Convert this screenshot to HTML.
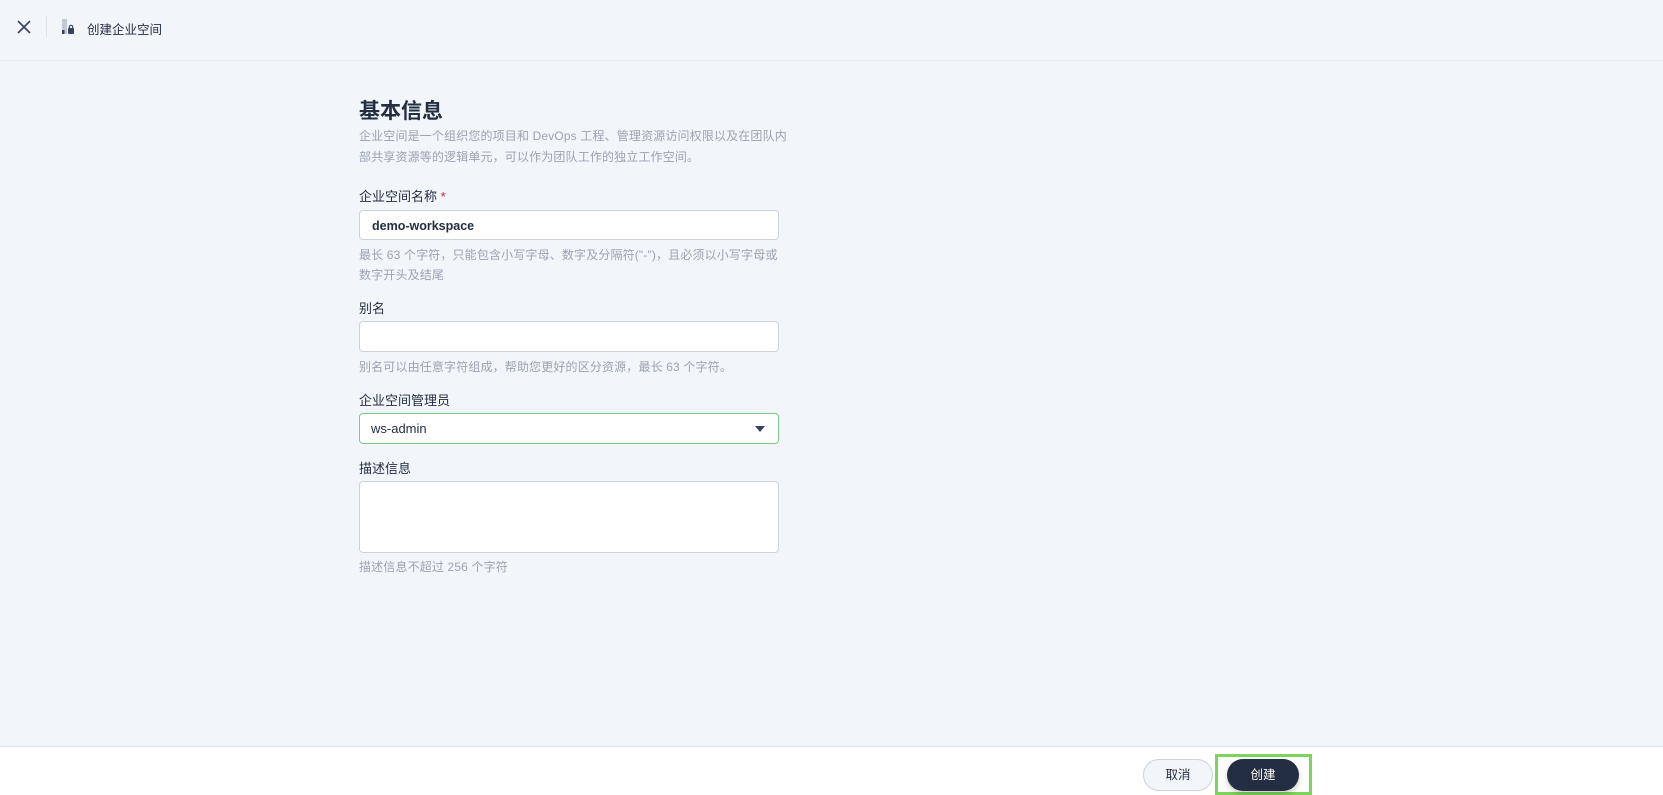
<!DOCTYPE html>
<html><head><meta charset="utf-8"><style>
*{box-sizing:border-box;margin:0;padding:0}
body{width:1663px;height:795px;background:#f2f5fa;font-family:"Liberation Sans","Noto Sans CJK SC",sans-serif;color:#242e42;position:relative;overflow:hidden}
.a{position:absolute;white-space:nowrap}
.lbl{font-size:13px;color:#242e42}
.hint{font-size:12px;color:#9ba3b2;line-height:20px;letter-spacing:0.15px}
.box{position:absolute;left:359px;width:420px;background:#fff;border:1px solid #ccd3db;border-radius:4px}
</style></head><body>
<div class="a" style="left:0;top:60px;width:1663px;height:1px;background:#e6ebf1"></div>
<svg class="a" style="left:17px;top:20px" width="14" height="14" viewBox="0 0 14 14"><path d="M1 1L13 13M13 1L1 13" stroke="#36435c" stroke-width="1.6"/></svg>
<div class="a" style="left:46px;top:16px;width:1px;height:21px;background:#dfe4ec"></div>
<svg class="a" style="left:62px;top:17px" width="14" height="19" viewBox="0 0 14 19"><rect x="0" y="2" width="5" height="15" fill="#c1c9d4"/><rect x="0" y="13" width="2.5" height="4" fill="#36435c"/><rect x="6" y="11" width="6" height="6" rx="1" fill="#36435c"/><path d="M7.3 11.5v-1.5a1.7 1.7 0 0 1 3.4 0v1.5" stroke="#36435c" fill="none" stroke-width="1.2"/></svg>
<div class="a" style="left:87px;top:19px;font-size:12.5px;color:#242e42">创建企业空间</div>

<div class="a" style="left:359px;top:95px;font-size:21px;font-weight:bold;color:#242e42">基本信息</div>
<div class="a hint" style="left:359px;top:126px;line-height:21px">企业空间是一个组织您的项目和 DevOps 工程、管理资源访问权限以及在团队内<br>部共享资源等的逻辑单元，可以作为团队工作的独立工作空间。</div>

<div class="a lbl" style="left:359px;top:186px">企业空间名称 <span style="color:#ca2621">*</span></div>
<div class="box" style="top:210px;height:30px"><span class="a" style="left:12px;top:8px;font-size:12.5px;font-weight:bold">demo-workspace</span></div>
<div class="a hint" style="left:359px;top:245px">最长 63 个字符，只能包含小写字母、数字及分隔符("-")，且必须以小写字母或<br>数字开头及结尾</div>

<div class="a lbl" style="left:359px;top:298px">别名</div>
<div class="box" style="top:321px;height:31px"></div>
<div class="a hint" style="left:359px;top:357px">别名可以由任意字符组成，帮助您更好的区分资源，最长 63 个字符。</div>

<div class="a lbl" style="left:359px;top:390px">企业空间管理员</div>
<div class="box" style="top:413px;height:31px;border-color:#7dc98a"><span class="a" style="left:11px;top:7px;font-size:13px">ws-admin</span>
<svg class="a" style="left:395px;top:12px" width="10" height="6"><path d="M0 0h10L5 6z" fill="#36435c"/></svg></div>

<div class="a lbl" style="left:359px;top:458px">描述信息</div>
<div class="box" style="top:481px;height:72px"></div>
<div class="a hint" style="left:359px;top:557px">描述信息不超过 256 个字符</div>

<div class="a" style="left:0;top:746px;width:1663px;height:49px;background:#fff;border-top:1px solid #dde3ec"></div>
<div class="a" style="left:1143px;top:759px;width:70px;height:32px;border:1px solid #ccd3db;border-radius:16px;background:#f2f5fa;font-size:12.5px;text-align:center;line-height:30px;color:#242e42">取消</div>
<div class="a" style="left:1215px;top:754px;width:97px;height:41px;border:3px solid #7ed35a"></div>
<div class="a" style="left:1227px;top:759px;width:72px;height:32px;border-radius:16px;background:#242e42;font-size:12.5px;text-align:center;line-height:32px;color:#fff;box-shadow:0 3px 6px rgba(0,0,0,.2)">创建</div>
</body></html>
